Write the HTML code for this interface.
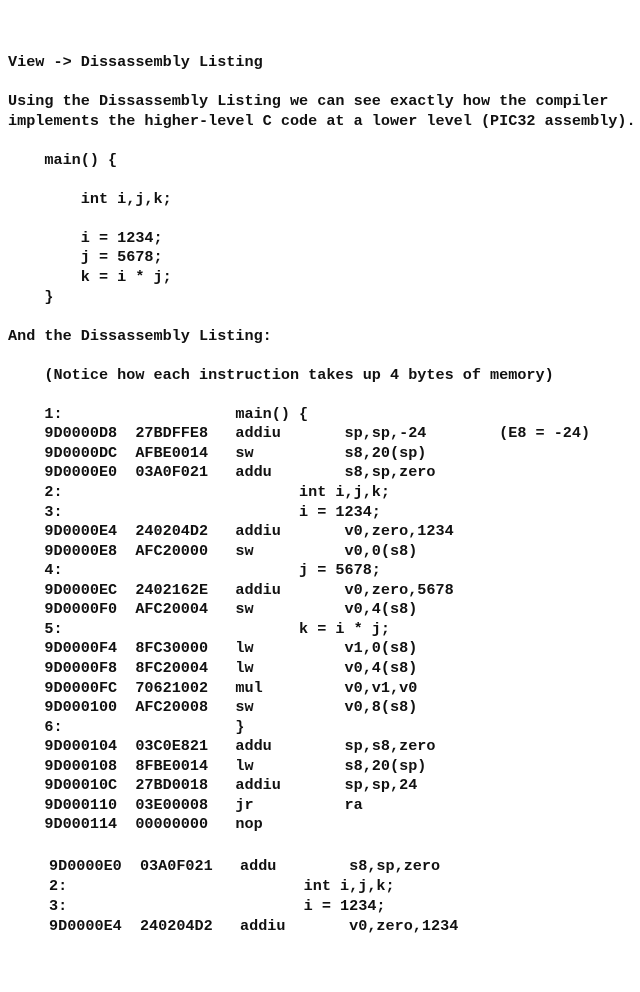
<!DOCTYPE html>
<html><head><meta charset="utf-8"><style>
html,body{margin:0;padding:0;background:#fff;width:640px;height:992px;overflow:hidden}
pre{position:absolute;margin:0;font-family:"Liberation Mono",monospace;font-weight:bold;font-size:15.17px;color:#111;}
#a{left:8px;top:53px;line-height:19.55px}
#b{left:49px;top:856px;line-height:20px}
</style></head><body>
<pre id="a">View -&gt; Dissassembly Listing

Using the Dissassembly Listing we can see exactly how the compiler
implements the higher-level C code at a lower level (PIC32 assembly).

    main() {

        int i,j,k;

        i = 1234;
        j = 5678;
        k = i * j;
    }

And the Dissassembly Listing:

    (Notice how each instruction takes up 4 bytes of memory)

    1:                   main() {
    9D0000D8  27BDFFE8   addiu       sp,sp,-24        (E8 = -24)
    9D0000DC  AFBE0014   sw          s8,20(sp)
    9D0000E0  03A0F021   addu        s8,sp,zero
    2:                          int i,j,k;
    3:                          i = 1234;
    9D0000E4  240204D2   addiu       v0,zero,1234
    9D0000E8  AFC20000   sw          v0,0(s8)
    4:                          j = 5678;
    9D0000EC  2402162E   addiu       v0,zero,5678
    9D0000F0  AFC20004   sw          v0,4(s8)
    5:                          k = i * j;
    9D0000F4  8FC30000   lw          v1,0(s8)
    9D0000F8  8FC20004   lw          v0,4(s8)
    9D0000FC  70621002   mul         v0,v1,v0
    9D000100  AFC20008   sw          v0,8(s8)
    6:                   }
    9D000104  03C0E821   addu        sp,s8,zero
    9D000108  8FBE0014   lw          s8,20(sp)
    9D00010C  27BD0018   addiu       sp,sp,24
    9D000110  03E00008   jr          ra
    9D000114  00000000   nop</pre>
<pre id="b">9D0000E0  03A0F021   addu        s8,sp,zero
2:                          int i,j,k;
3:                          i = 1234;
9D0000E4  240204D2   addiu       v0,zero,1234</pre>
</body></html>
